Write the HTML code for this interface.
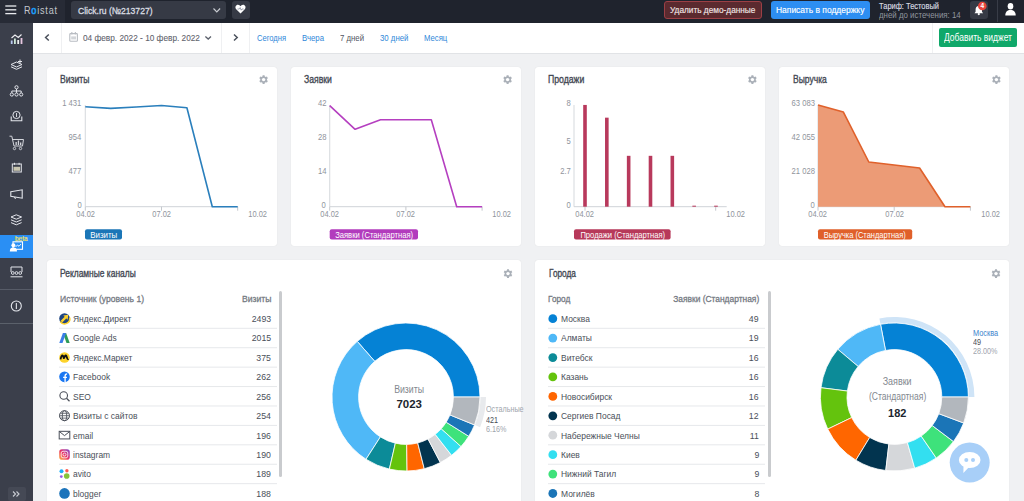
<!DOCTYPE html><html><head><meta charset="utf-8"><title>Roistat</title><style>
html,body{margin:0;padding:0;}
body{width:1024px;height:501px;overflow:hidden;position:relative;background:#f0f1f3;font-family:"Liberation Sans",sans-serif;}
.t{position:absolute;white-space:nowrap;}
svg{position:absolute;left:0;top:0;}
</style></head><body>
<div style="position:absolute;left:0px;top:0px;width:1024px;height:23px;background:#1f232d;"></div>
<div style="position:absolute;left:0px;top:0px;width:65px;height:23px;background:#272b36;"></div>
<div style="position:absolute;left:0px;top:23px;width:33px;height:478px;background:#3b3f4b;"></div>
<div style="position:absolute;left:33px;top:23px;width:991px;height:31px;background:#ffffff;border-bottom:1px solid #e1e3e6;box-sizing:border-box;"></div>
<div style="position:absolute;left:61px;top:23px;width:1px;height:30px;background:#eff0f2;"></div>
<div style="position:absolute;left:221px;top:23px;width:1px;height:30px;background:#eff0f2;"></div>
<div style="position:absolute;left:249px;top:23px;width:1px;height:30px;background:#eff0f2;"></div>
<div style="position:absolute;left:932px;top:23px;width:1px;height:30px;background:#eff0f2;"></div>
<div style="position:absolute;left:47px;top:67px;width:230px;height:179px;background:#ffffff;border-radius:3px;box-shadow:0 0 1px rgba(0,0,0,.12);"></div>
<div style="position:absolute;left:291px;top:67px;width:230px;height:179px;background:#ffffff;border-radius:3px;box-shadow:0 0 1px rgba(0,0,0,.12);"></div>
<div style="position:absolute;left:535px;top:67px;width:230px;height:179px;background:#ffffff;border-radius:3px;box-shadow:0 0 1px rgba(0,0,0,.12);"></div>
<div style="position:absolute;left:779px;top:67px;width:230px;height:179px;background:#ffffff;border-radius:3px;box-shadow:0 0 1px rgba(0,0,0,.12);"></div>
<div style="position:absolute;left:47px;top:260px;width:474px;height:260px;background:#ffffff;border-radius:3px;box-shadow:0 0 1px rgba(0,0,0,.12);"></div>
<div style="position:absolute;left:535px;top:260px;width:474px;height:260px;background:#ffffff;border-radius:3px;box-shadow:0 0 1px rgba(0,0,0,.12);"></div>
<div style="position:absolute;left:71px;top:1px;width:155px;height:18px;background:#363a45;border-radius:3px;"></div>
<div style="position:absolute;left:232px;top:1px;width:18px;height:18px;background:#363a45;border-radius:3px;"></div>
<div style="position:absolute;left:664px;top:1px;width:98px;height:18px;background:#5b2a2f;border:1px solid #9c3f45;box-sizing:border-box;border-radius:3px;"></div>
<div style="position:absolute;left:771px;top:1px;width:99px;height:18px;background:#2d8ef2;border-radius:3px;"></div>
<div style="position:absolute;left:970px;top:1px;width:18px;height:18px;background:#363a45;border-radius:3px;"></div>
<div style="position:absolute;left:997px;top:0px;width:1px;height:22px;background:#383c47;"></div>
<div style="position:absolute;left:939px;top:28.3px;width:78px;height:18.5px;background:#10a86a;border-radius:2px;"></div>
<div style="position:absolute;left:0px;top:235px;width:33px;height:23px;background:#2a8ff4;"></div>
<div style="position:absolute;left:0px;top:289px;width:33px;height:1px;background:#575c68;"></div>
<div style="position:absolute;left:0px;top:323px;width:33px;height:1px;background:#5b616b;"></div>
<div style="position:absolute;left:8px;top:487px;width:18px;height:14px;background:#454955;border-radius:2px;"></div>
<div style="position:absolute;left:279px;top:291px;width:3px;height:186px;background:#c9cbce;border-radius:2px;"></div>
<div style="position:absolute;left:767.5px;top:291px;width:3px;height:186px;background:#c9cbce;border-radius:2px;"></div>
<div class="t" style="left:23.60px;top:4.65px;font-size:10.5px;line-height:10.5px;color:#c3c6cc;font-weight:normal;transform:scaleX(0.8671);transform-origin:0 0;letter-spacing:0.9px;">R<span style="color:#1d9af2;-webkit-text-stroke:0.7px #1d9af2">o</span>istat</div>
<div class="t" style="left:77.80px;top:5.70px;font-size:9.6px;line-height:9.6px;color:#dadde2;font-weight:normal;transform:scaleX(0.8945);transform-origin:0 0;-webkit-text-stroke:0.3px #dadde2;">Click.ru (№213727)</div>
<div class="t" style="left:670.00px;top:5.35px;font-size:9.7px;line-height:9.7px;color:#f1e6e6;font-weight:normal;transform:scaleX(0.8532);transform-origin:0 0;-webkit-text-stroke:0.15px #f1e6e6;">Удалить демо-данные</div>
<div class="t" style="left:776.00px;top:5.35px;font-size:9.7px;line-height:9.7px;color:#ffffff;font-weight:normal;transform:scaleX(0.8730);transform-origin:0 0;-webkit-text-stroke:0.15px #ffffff;">Написать в поддержку</div>
<div class="t" style="left:879.30px;top:1.85px;font-size:8.5px;line-height:8.5px;color:#d8dbe0;font-weight:normal;transform:scaleX(0.8782);transform-origin:0 0;-webkit-text-stroke:0.15px #d8dbe0;">Тариф: Тестовый</div>
<div class="t" style="left:879.30px;top:11.15px;font-size:8.5px;line-height:8.5px;color:#90959e;font-weight:normal;transform:scaleX(0.9267);transform-origin:0 0;">дней до истечения: 14</div>
<div class="t" style="left:82.50px;top:33.20px;font-size:9.6px;line-height:9.6px;color:#5f646d;font-weight:normal;transform:scaleX(0.8606);transform-origin:0 0;-webkit-text-stroke:0.1px #5f646d;">04 февр. 2022 - 10 февр. 2022</div>
<div class="t" style="left:257.20px;top:32.75px;font-size:9.5px;line-height:9.5px;color:#2f87d9;font-weight:normal;transform:scaleX(0.7965);transform-origin:0 0;">Сегодня</div>
<div class="t" style="left:301.90px;top:32.75px;font-size:9.5px;line-height:9.5px;color:#2f87d9;font-weight:normal;transform:scaleX(0.8202);transform-origin:0 0;">Вчера</div>
<div class="t" style="left:339.50px;top:32.75px;font-size:9.5px;line-height:9.5px;color:#50555f;font-weight:normal;transform:scaleX(0.8190);transform-origin:0 0;">7 дней</div>
<div class="t" style="left:379.60px;top:32.75px;font-size:9.5px;line-height:9.5px;color:#2f87d9;font-weight:normal;transform:scaleX(0.8211);transform-origin:0 0;">30 дней</div>
<div class="t" style="left:423.70px;top:32.75px;font-size:9.5px;line-height:9.5px;color:#2f87d9;font-weight:normal;transform:scaleX(0.8101);transform-origin:0 0;">Месяц</div>
<div class="t" style="left:943.90px;top:33.40px;font-size:10px;line-height:10px;color:#ffffff;font-weight:normal;transform:scaleX(0.8478);transform-origin:0 0;">Добавить виджет</div>
<div class="t" style="left:60.00px;top:75.00px;font-size:10.4px;line-height:10.4px;color:#434853;font-weight:normal;transform:scaleX(0.8295);transform-origin:0 0;-webkit-text-stroke:0.35px #434853;">Визиты</div>
<div class="t" style="left:303.80px;top:75.00px;font-size:10.4px;line-height:10.4px;color:#434853;font-weight:normal;transform:scaleX(0.8308);transform-origin:0 0;-webkit-text-stroke:0.35px #434853;">Заявки</div>
<div class="t" style="left:548.00px;top:75.00px;font-size:10.4px;line-height:10.4px;color:#434853;font-weight:normal;transform:scaleX(0.8357);transform-origin:0 0;-webkit-text-stroke:0.35px #434853;">Продажи</div>
<div class="t" style="left:792.80px;top:75.00px;font-size:10.4px;line-height:10.4px;color:#434853;font-weight:normal;transform:scaleX(0.8216);transform-origin:0 0;-webkit-text-stroke:0.35px #434853;">Выручка</div>
<div class="t" style="left:60.00px;top:269.10px;font-size:10.2px;line-height:10.2px;color:#434853;font-weight:normal;transform:scaleX(0.8269);transform-origin:0 0;-webkit-text-stroke:0.35px #434853;">Рекламные каналы</div>
<div class="t" style="left:548.70px;top:269.10px;font-size:10.2px;line-height:10.2px;color:#434853;font-weight:normal;transform:scaleX(0.8118);transform-origin:0 0;-webkit-text-stroke:0.35px #434853;">Города</div>
<svg width="1024" height="501" viewBox="0 0 1024 501"><polygon points="262.44,76.41 262.66,75.20 264.54,75.20 264.76,76.41 265.79,77.00 266.94,76.59 267.88,78.21 266.95,79.01 266.95,80.19 267.88,80.99 266.94,82.61 265.79,82.20 264.76,82.79 264.54,84.00 262.66,84.00 262.44,82.79 261.41,82.20 260.26,82.61 259.32,80.99 260.25,80.19 260.25,79.01 259.32,78.21 260.26,76.59 261.41,77.00" fill="#aab0b8"/><circle cx="263.6" cy="79.6" r="1.7" fill="#fff"/><polygon points="506.44,76.41 506.66,75.20 508.54,75.20 508.76,76.41 509.79,77.00 510.94,76.59 511.88,78.21 510.95,79.01 510.95,80.19 511.88,80.99 510.94,82.61 509.79,82.20 508.76,82.79 508.54,84.00 506.66,84.00 506.44,82.79 505.41,82.20 504.26,82.61 503.32,80.99 504.25,80.19 504.25,79.01 503.32,78.21 504.26,76.59 505.41,77.00" fill="#aab0b8"/><circle cx="507.6" cy="79.6" r="1.7" fill="#fff"/><polygon points="751.24,76.41 751.46,75.20 753.34,75.20 753.56,76.41 754.59,77.00 755.74,76.59 756.68,78.21 755.75,79.01 755.75,80.19 756.68,80.99 755.74,82.61 754.59,82.20 753.56,82.79 753.34,84.00 751.46,84.00 751.24,82.79 750.21,82.20 749.06,82.61 748.12,80.99 749.05,80.19 749.05,79.01 748.12,78.21 749.06,76.59 750.21,77.00" fill="#aab0b8"/><circle cx="752.4" cy="79.6" r="1.7" fill="#fff"/><polygon points="995.24,76.41 995.46,75.20 997.34,75.20 997.56,76.41 998.59,77.00 999.74,76.59 1000.68,78.21 999.75,79.01 999.75,80.19 1000.68,80.99 999.74,82.61 998.59,82.20 997.56,82.79 997.34,84.00 995.46,84.00 995.24,82.79 994.21,82.20 993.06,82.61 992.12,80.99 993.05,80.19 993.05,79.01 992.12,78.21 993.06,76.59 994.21,77.00" fill="#aab0b8"/><circle cx="996.4" cy="79.6" r="1.7" fill="#fff"/><polygon points="506.84,270.41 507.06,269.20 508.94,269.20 509.16,270.41 510.19,271.00 511.34,270.59 512.28,272.21 511.35,273.01 511.35,274.19 512.28,274.99 511.34,276.61 510.19,276.20 509.16,276.79 508.94,278.00 507.06,278.00 506.84,276.79 505.81,276.20 504.66,276.61 503.72,274.99 504.65,274.19 504.65,273.01 503.72,272.21 504.66,270.59 505.81,271.00" fill="#aab0b8"/><circle cx="508" cy="273.6" r="1.7" fill="#fff"/><polygon points="994.84,270.41 995.06,269.20 996.94,269.20 997.16,270.41 998.19,271.00 999.34,270.59 1000.28,272.21 999.35,273.01 999.35,274.19 1000.28,274.99 999.34,276.61 998.19,276.20 997.16,276.79 996.94,278.00 995.06,278.00 994.84,276.79 993.81,276.20 992.66,276.61 991.72,274.99 992.65,274.19 992.65,273.01 991.72,272.21 992.66,270.59 993.81,271.00" fill="#aab0b8"/><circle cx="996" cy="273.6" r="1.7" fill="#fff"/><line x1="85.3" y1="105" x2="85.3" y2="206.7" stroke="#d9dce0" stroke-width="1.1"/><line x1="85.3" y1="206.7" x2="237.7" y2="206.7" stroke="#cfd3d8" stroke-width="1"/><line x1="85.3" y1="206.7" x2="85.3" y2="210.7" stroke="#c4c8cd" stroke-width="1"/><line x1="161.5" y1="206.7" x2="161.5" y2="210.7" stroke="#c4c8cd" stroke-width="1"/><line x1="237.7" y1="206.7" x2="237.7" y2="210.7" stroke="#c4c8cd" stroke-width="1"/><polyline fill="none" stroke="#2a7fbc" stroke-width="1.6" stroke-linejoin="round" points="85.3,106.8 110.7,108.4 136.1,107.0 161.5,105.5 186.9,107.7 212.3,206.7 237.7,206.7"/><line x1="329.7" y1="105" x2="329.7" y2="206.7" stroke="#d9dce0" stroke-width="1.1"/><line x1="329.7" y1="206.7" x2="482.09999999999997" y2="206.7" stroke="#cfd3d8" stroke-width="1"/><line x1="329.7" y1="206.7" x2="329.7" y2="210.7" stroke="#c4c8cd" stroke-width="1"/><line x1="405.9" y1="206.7" x2="405.9" y2="210.7" stroke="#c4c8cd" stroke-width="1"/><line x1="482.09999999999997" y1="206.7" x2="482.09999999999997" y2="210.7" stroke="#c4c8cd" stroke-width="1"/><polyline fill="none" stroke="#b53fc0" stroke-width="1.6" stroke-linejoin="round" points="329.7,105.7 355.1,129.3 380.5,119.7 405.9,119.7 431.3,119.7 456.7,206.7 482.1,206.7"/><line x1="574" y1="105" x2="574" y2="206.7" stroke="#d9dce0" stroke-width="1.1"/><line x1="574" y1="206.7" x2="726.7" y2="206.7" stroke="#cfd3d8" stroke-width="1"/><line x1="585" y1="206.7" x2="585" y2="210.7" stroke="#c4c8cd" stroke-width="1"/><line x1="715.7" y1="206.7" x2="715.7" y2="210.7" stroke="#c4c8cd" stroke-width="1"/><rect x="583.20" y="104.94" width="3.6" height="101.76" fill="#b8395c"/><rect x="605.03" y="117.66" width="3.6" height="89.04" fill="#b8395c"/><rect x="626.86" y="155.82" width="3.6" height="50.88" fill="#b8395c"/><rect x="648.69" y="155.82" width="3.6" height="50.88" fill="#b8395c"/><rect x="670.52" y="155.82" width="3.6" height="50.88" fill="#b8395c"/><rect x="692.35" y="205.68" width="3.6" height="1.02" fill="#b8395c"/><rect x="714.18" y="205.68" width="3.6" height="1.02" fill="#b8395c"/><line x1="818" y1="105" x2="818" y2="206.7" stroke="#d9dce0" stroke-width="1.1"/><line x1="818" y1="206.7" x2="970.4" y2="206.7" stroke="#cfd3d8" stroke-width="1"/><line x1="818" y1="206.7" x2="818" y2="210.7" stroke="#c4c8cd" stroke-width="1"/><line x1="894.2" y1="206.7" x2="894.2" y2="210.7" stroke="#c4c8cd" stroke-width="1"/><line x1="970.4" y1="206.7" x2="970.4" y2="210.7" stroke="#c4c8cd" stroke-width="1"/><polygon fill="#ec9b76" points="818.0,104.9 843.4,112.1 868.8,162.0 894.2,165.0 919.6,168.0 945.0,206.7 970.4,206.7 970.4,206.7 818,206.7"/><polyline fill="none" stroke="#e0612b" stroke-width="1.6" stroke-linejoin="round" points="818.0,104.9 843.4,112.1 868.8,162.0 894.2,165.0 919.6,168.0 945.0,206.7 970.4,206.7"/><rect x="85" y="229.2" width="37" height="10.4" rx="2" fill="#1b76b7"/><rect x="329.7" y="229.2" width="88.3" height="10.4" rx="2" fill="#b23bbd"/><rect x="574" y="229.2" width="96.6" height="10.4" rx="2" fill="#b7395a"/><rect x="818" y="229.2" width="94.2" height="10.4" rx="2" fill="#e0602a"/><path d="M480.00,397.00 A74,74 0 0 0 357.23,341.35 L374.76,361.35 A47.4,47.4 0 0 1 453.40,397.00 Z" fill="#0582d5" stroke="#fff" stroke-width="0.8" stroke-linejoin="round"/><path d="M357.23,341.35 A74,74 0 0 0 366.02,459.27 L380.39,436.89 A47.4,47.4 0 0 1 374.76,361.35 Z" fill="#4fb8f7" stroke="#fff" stroke-width="0.8" stroke-linejoin="round"/><path d="M366.02,459.27 A74,74 0 0 0 389.40,469.11 L395.37,443.19 A47.4,47.4 0 0 1 380.39,436.89 Z" fill="#0c8b98" stroke="#fff" stroke-width="0.8" stroke-linejoin="round"/><path d="M389.40,469.11 A74,74 0 0 0 407.07,470.99 L406.69,444.40 A47.4,47.4 0 0 1 395.37,443.19 Z" fill="#64c30d" stroke="#fff" stroke-width="0.8" stroke-linejoin="round"/><path d="M407.07,470.99 A74,74 0 0 0 424.28,468.71 L417.71,442.93 A47.4,47.4 0 0 1 406.69,444.40 Z" fill="#ff6600" stroke="#fff" stroke-width="0.8" stroke-linejoin="round"/><path d="M424.28,468.71 A74,74 0 0 0 440.37,462.53 L428.02,438.98 A47.4,47.4 0 0 1 417.71,442.93 Z" fill="#02344f" stroke="#fff" stroke-width="0.8" stroke-linejoin="round"/><path d="M440.37,462.53 A74,74 0 0 0 451.55,455.32 L435.18,434.36 A47.4,47.4 0 0 1 428.02,438.98 Z" fill="#d5d7da" stroke="#fff" stroke-width="0.8" stroke-linejoin="round"/><path d="M451.55,455.32 A74,74 0 0 0 460.99,446.52 L441.22,428.72 A47.4,47.4 0 0 1 435.18,434.36 Z" fill="#33dff0" stroke="#fff" stroke-width="0.8" stroke-linejoin="round"/><path d="M460.99,446.52 A74,74 0 0 0 468.72,436.28 L446.17,422.16 A47.4,47.4 0 0 1 441.22,428.72 Z" fill="#3ee27b" stroke="#fff" stroke-width="0.8" stroke-linejoin="round"/><path d="M468.72,436.28 A74,74 0 0 0 474.53,424.91 L449.90,414.88 A47.4,47.4 0 0 1 446.17,422.16 Z" fill="#1b75b7" stroke="#fff" stroke-width="0.8" stroke-linejoin="round"/><path d="M474.53,424.91 A74,74 0 0 0 480.00,397.00 L453.40,397.00 A47.4,47.4 0 0 1 449.90,414.88 Z" fill="#b2b7bd" stroke="#fff" stroke-width="0.8" stroke-linejoin="round"/><path d="M475.00,425.10 A74,74 0 0 0 480.50,397.00 L486.00,397.00 A80,80 0 0 1 480.09,427.18 Z" fill="#e8eaed"/><path d="M968.40,397.00 A74,74 0 0 0 880.53,324.31 L885.52,350.44 A47.4,47.4 0 0 1 941.80,397.00 Z" fill="#0582d5" stroke="#fff" stroke-width="0.8" stroke-linejoin="round"/><path d="M968.90,397.00 A74,74 0 0 0 880.44,323.82 L879.41,318.42 A80,80 0 0 1 974.40,397.00 Z" fill="#cfe4f7"/><path d="M880.53,324.31 A74,74 0 0 0 837.81,349.32 L858.15,366.46 A47.4,47.4 0 0 1 885.52,350.44 Z" fill="#4fb8f7" stroke="#fff" stroke-width="0.8" stroke-linejoin="round"/><path d="M837.81,349.32 A74,74 0 0 0 820.98,387.73 L847.37,391.06 A47.4,47.4 0 0 1 858.15,366.46 Z" fill="#0c8b98" stroke="#fff" stroke-width="0.8" stroke-linejoin="round"/><path d="M820.98,387.73 A74,74 0 0 0 827.73,429.11 L851.69,417.57 A47.4,47.4 0 0 1 847.37,391.06 Z" fill="#64c30d" stroke="#fff" stroke-width="0.8" stroke-linejoin="round"/><path d="M827.73,429.11 A74,74 0 0 0 855.88,460.18 L869.72,437.47 A47.4,47.4 0 0 1 851.69,417.57 Z" fill="#ff6600" stroke="#fff" stroke-width="0.8" stroke-linejoin="round"/><path d="M855.88,460.18 A74,74 0 0 0 885.78,470.50 L888.88,444.08 A47.4,47.4 0 0 1 869.72,437.47 Z" fill="#02344f" stroke="#fff" stroke-width="0.8" stroke-linejoin="round"/><path d="M885.78,470.50 A74,74 0 0 0 914.73,468.15 L907.42,442.58 A47.4,47.4 0 0 1 888.88,444.08 Z" fill="#d5d7da" stroke="#fff" stroke-width="0.8" stroke-linejoin="round"/><path d="M914.73,468.15 A74,74 0 0 0 936.27,458.02 L921.22,436.08 A47.4,47.4 0 0 1 907.42,442.58 Z" fill="#33dff0" stroke="#fff" stroke-width="0.8" stroke-linejoin="round"/><path d="M936.27,458.02 A74,74 0 0 0 953.48,441.56 L932.24,425.54 A47.4,47.4 0 0 1 921.22,436.08 Z" fill="#3ee27b" stroke="#fff" stroke-width="0.8" stroke-linejoin="round"/><path d="M953.48,441.56 A74,74 0 0 0 963.68,423.00 L938.78,413.66 A47.4,47.4 0 0 1 932.24,425.54 Z" fill="#1b75b7" stroke="#fff" stroke-width="0.8" stroke-linejoin="round"/><path d="M963.68,423.00 A74,74 0 0 0 968.40,397.00 L941.80,397.00 A47.4,47.4 0 0 1 938.78,413.66 Z" fill="#b2b7bd" stroke="#fff" stroke-width="0.8" stroke-linejoin="round"/><circle cx="969.7" cy="462.6" r="20" fill="#a8cff8"/><ellipse cx="969.7" cy="460" rx="10.8" ry="8.1" fill="#fff"/><path d="M963.5,465 L963.4,473 L970,466 Z" fill="#fff"/><circle cx="966.3" cy="460" r="2" fill="#a8cff8"/><circle cx="973" cy="460" r="2" fill="#a8cff8"/><line x1="59" y1="328.30" x2="277" y2="328.30" stroke="#e6e8eb" stroke-width="1"/><line x1="59" y1="347.72" x2="277" y2="347.72" stroke="#e6e8eb" stroke-width="1"/><line x1="59" y1="367.14" x2="277" y2="367.14" stroke="#e6e8eb" stroke-width="1"/><line x1="59" y1="386.56" x2="277" y2="386.56" stroke="#e6e8eb" stroke-width="1"/><line x1="59" y1="405.98" x2="277" y2="405.98" stroke="#e6e8eb" stroke-width="1"/><line x1="59" y1="425.40" x2="277" y2="425.40" stroke="#e6e8eb" stroke-width="1"/><line x1="59" y1="444.82" x2="277" y2="444.82" stroke="#e6e8eb" stroke-width="1"/><line x1="59" y1="464.24" x2="277" y2="464.24" stroke="#e6e8eb" stroke-width="1"/><line x1="59" y1="483.66" x2="277" y2="483.66" stroke="#e6e8eb" stroke-width="1"/><line x1="548" y1="328.30" x2="765" y2="328.30" stroke="#e6e8eb" stroke-width="1"/><line x1="548" y1="347.72" x2="765" y2="347.72" stroke="#e6e8eb" stroke-width="1"/><line x1="548" y1="367.14" x2="765" y2="367.14" stroke="#e6e8eb" stroke-width="1"/><line x1="548" y1="386.56" x2="765" y2="386.56" stroke="#e6e8eb" stroke-width="1"/><line x1="548" y1="405.98" x2="765" y2="405.98" stroke="#e6e8eb" stroke-width="1"/><line x1="548" y1="425.40" x2="765" y2="425.40" stroke="#e6e8eb" stroke-width="1"/><line x1="548" y1="444.82" x2="765" y2="444.82" stroke="#e6e8eb" stroke-width="1"/><line x1="548" y1="464.24" x2="765" y2="464.24" stroke="#e6e8eb" stroke-width="1"/><line x1="548" y1="483.66" x2="765" y2="483.66" stroke="#e6e8eb" stroke-width="1"/></svg>
<div class="t" style="left:60.33px;top:98.75px;font-size:8.5px;line-height:8.5px;color:#8f949c;font-weight:normal;transform:scaleX(0.9000);transform-origin:100% 0;">1 431</div>
<div class="t" style="left:67.42px;top:132.75px;font-size:8.5px;line-height:8.5px;color:#8f949c;font-weight:normal;transform:scaleX(0.9000);transform-origin:100% 0;">954</div>
<div class="t" style="left:67.42px;top:166.75px;font-size:8.5px;line-height:8.5px;color:#8f949c;font-weight:normal;transform:scaleX(0.9000);transform-origin:100% 0;">477</div>
<div class="t" style="left:76.87px;top:200.75px;font-size:8.5px;line-height:8.5px;color:#8f949c;font-weight:normal;transform:scaleX(0.9000);transform-origin:100% 0;">0</div>
<div class="t" style="left:316.55px;top:98.75px;font-size:8.5px;line-height:8.5px;color:#8f949c;font-weight:normal;transform:scaleX(0.9000);transform-origin:100% 0;">42</div>
<div class="t" style="left:316.55px;top:132.75px;font-size:8.5px;line-height:8.5px;color:#8f949c;font-weight:normal;transform:scaleX(0.9000);transform-origin:100% 0;">28</div>
<div class="t" style="left:316.55px;top:166.75px;font-size:8.5px;line-height:8.5px;color:#8f949c;font-weight:normal;transform:scaleX(0.9000);transform-origin:100% 0;">14</div>
<div class="t" style="left:321.27px;top:200.75px;font-size:8.5px;line-height:8.5px;color:#8f949c;font-weight:normal;transform:scaleX(0.9000);transform-origin:100% 0;">0</div>
<div class="t" style="left:565.77px;top:98.75px;font-size:8.5px;line-height:8.5px;color:#8f949c;font-weight:normal;transform:scaleX(0.9000);transform-origin:100% 0;">8</div>
<div class="t" style="left:565.77px;top:136.65px;font-size:8.5px;line-height:8.5px;color:#8f949c;font-weight:normal;transform:scaleX(0.9000);transform-origin:100% 0;">5</div>
<div class="t" style="left:558.68px;top:166.55px;font-size:8.5px;line-height:8.5px;color:#8f949c;font-weight:normal;transform:scaleX(0.9000);transform-origin:100% 0;">2.7</div>
<div class="t" style="left:565.77px;top:200.55px;font-size:8.5px;line-height:8.5px;color:#8f949c;font-weight:normal;transform:scaleX(0.9000);transform-origin:100% 0;">0</div>
<div class="t" style="left:788.50px;top:98.75px;font-size:8.5px;line-height:8.5px;color:#8f949c;font-weight:normal;transform:scaleX(0.9000);transform-origin:100% 0;">63 083</div>
<div class="t" style="left:788.50px;top:132.75px;font-size:8.5px;line-height:8.5px;color:#8f949c;font-weight:normal;transform:scaleX(0.9000);transform-origin:100% 0;">42 055</div>
<div class="t" style="left:788.50px;top:166.75px;font-size:8.5px;line-height:8.5px;color:#8f949c;font-weight:normal;transform:scaleX(0.9000);transform-origin:100% 0;">21 028</div>
<div class="t" style="left:809.77px;top:200.75px;font-size:8.5px;line-height:8.5px;color:#8f949c;font-weight:normal;transform:scaleX(0.9000);transform-origin:100% 0;">0</div>
<div class="t" style="left:74.66px;top:210.25px;font-size:8.5px;line-height:8.5px;color:#8f949c;font-weight:normal;transform:scaleX(0.8800);transform-origin:50% 0;">04.02</div>
<div class="t" style="left:150.86px;top:210.25px;font-size:8.5px;line-height:8.5px;color:#8f949c;font-weight:normal;transform:scaleX(0.8800);transform-origin:50% 0;">07.02</div>
<div class="t" style="left:247.06px;top:210.25px;font-size:8.5px;line-height:8.5px;color:#8f949c;font-weight:normal;transform:scaleX(0.8800);transform-origin:50% 0;">10.02</div>
<div class="t" style="left:319.06px;top:210.25px;font-size:8.5px;line-height:8.5px;color:#8f949c;font-weight:normal;transform:scaleX(0.8800);transform-origin:50% 0;">04.02</div>
<div class="t" style="left:395.26px;top:210.25px;font-size:8.5px;line-height:8.5px;color:#8f949c;font-weight:normal;transform:scaleX(0.8800);transform-origin:50% 0;">07.02</div>
<div class="t" style="left:491.36px;top:210.25px;font-size:8.5px;line-height:8.5px;color:#8f949c;font-weight:normal;transform:scaleX(0.8800);transform-origin:50% 0;">10.02</div>
<div class="t" style="left:574.06px;top:210.25px;font-size:8.5px;line-height:8.5px;color:#8f949c;font-weight:normal;transform:scaleX(0.8800);transform-origin:50% 0;">04.02</div>
<div class="t" style="left:725.06px;top:210.25px;font-size:8.5px;line-height:8.5px;color:#8f949c;font-weight:normal;transform:scaleX(0.8800);transform-origin:50% 0;">10.02</div>
<div class="t" style="left:807.36px;top:210.25px;font-size:8.5px;line-height:8.5px;color:#8f949c;font-weight:normal;transform:scaleX(0.8800);transform-origin:50% 0;">04.02</div>
<div class="t" style="left:883.56px;top:210.25px;font-size:8.5px;line-height:8.5px;color:#8f949c;font-weight:normal;transform:scaleX(0.8800);transform-origin:50% 0;">07.02</div>
<div class="t" style="left:979.66px;top:210.25px;font-size:8.5px;line-height:8.5px;color:#8f949c;font-weight:normal;transform:scaleX(0.8800);transform-origin:50% 0;">10.02</div>
<div class="t" style="left:86.74px;top:229.70px;font-size:9.8px;line-height:9.8px;color:#ffffff;font-weight:normal;transform:scaleX(0.8057);transform-origin:50% 0;">Визиты</div>
<div class="t" style="left:323.71px;top:229.70px;font-size:9.8px;line-height:9.8px;color:#ffffff;font-weight:normal;transform:scaleX(0.7779);transform-origin:50% 0;">Заявки (Стандартная)</div>
<div class="t" style="left:567.52px;top:229.70px;font-size:9.8px;line-height:9.8px;color:#ffffff;font-weight:normal;transform:scaleX(0.7731);transform-origin:50% 0;">Продажи (Стандартная)</div>
<div class="t" style="left:811.34px;top:229.70px;font-size:9.8px;line-height:9.8px;color:#ffffff;font-weight:normal;transform:scaleX(0.7627);transform-origin:50% 0;">Выручка (Стандартная)</div>
<div class="t" style="left:60.00px;top:294.45px;font-size:9.5px;line-height:9.5px;color:#747982;font-weight:normal;transform:scaleX(0.9025);transform-origin:0 0;-webkit-text-stroke:0.3px #747982;">Источник (уровень 1)</div>
<div class="t" style="left:238.51px;top:294.45px;font-size:9.5px;line-height:9.5px;color:#747982;font-weight:normal;transform:scaleX(0.9050);transform-origin:100% 0;-webkit-text-stroke:0.3px #747982;">Визиты</div>
<div class="t" style="left:548.30px;top:294.45px;font-size:9.5px;line-height:9.5px;color:#747982;font-weight:normal;transform:scaleX(0.8679);transform-origin:0 0;-webkit-text-stroke:0.3px #747982;">Город</div>
<div class="t" style="left:661.79px;top:294.45px;font-size:9.5px;line-height:9.5px;color:#747982;font-weight:normal;transform:scaleX(0.8847);transform-origin:100% 0;-webkit-text-stroke:0.3px #747982;">Заявки (Стандартная)</div>
<div class="t" style="left:72.60px;top:314.05px;font-size:9.5px;line-height:9.5px;color:#4a4f59;font-weight:normal;transform:scaleX(0.8900);transform-origin:0 0;">Яндекс.Директ</div>
<div class="t" style="left:249.87px;top:314.05px;font-size:9.5px;line-height:9.5px;color:#4a4f59;font-weight:normal;transform:scaleX(0.9200);transform-origin:100% 0;">2493</div>
<div class="t" style="left:72.60px;top:333.47px;font-size:9.5px;line-height:9.5px;color:#4a4f59;font-weight:normal;transform:scaleX(0.8900);transform-origin:0 0;">Google Ads</div>
<div class="t" style="left:249.87px;top:333.47px;font-size:9.5px;line-height:9.5px;color:#4a4f59;font-weight:normal;transform:scaleX(0.9200);transform-origin:100% 0;">2015</div>
<div class="t" style="left:72.60px;top:352.89px;font-size:9.5px;line-height:9.5px;color:#4a4f59;font-weight:normal;transform:scaleX(0.8900);transform-origin:0 0;">Яндекс.Маркет</div>
<div class="t" style="left:255.15px;top:352.89px;font-size:9.5px;line-height:9.5px;color:#4a4f59;font-weight:normal;transform:scaleX(0.9200);transform-origin:100% 0;">375</div>
<div class="t" style="left:72.60px;top:372.31px;font-size:9.5px;line-height:9.5px;color:#4a4f59;font-weight:normal;transform:scaleX(0.8900);transform-origin:0 0;">Facebook</div>
<div class="t" style="left:255.15px;top:372.31px;font-size:9.5px;line-height:9.5px;color:#4a4f59;font-weight:normal;transform:scaleX(0.9200);transform-origin:100% 0;">262</div>
<div class="t" style="left:72.60px;top:391.73px;font-size:9.5px;line-height:9.5px;color:#4a4f59;font-weight:normal;transform:scaleX(0.8900);transform-origin:0 0;">SEO</div>
<div class="t" style="left:255.15px;top:391.73px;font-size:9.5px;line-height:9.5px;color:#4a4f59;font-weight:normal;transform:scaleX(0.9200);transform-origin:100% 0;">256</div>
<div class="t" style="left:72.60px;top:411.15px;font-size:9.5px;line-height:9.5px;color:#4a4f59;font-weight:normal;transform:scaleX(0.8900);transform-origin:0 0;">Визиты с сайтов</div>
<div class="t" style="left:255.15px;top:411.15px;font-size:9.5px;line-height:9.5px;color:#4a4f59;font-weight:normal;transform:scaleX(0.9200);transform-origin:100% 0;">254</div>
<div class="t" style="left:72.60px;top:430.57px;font-size:9.5px;line-height:9.5px;color:#4a4f59;font-weight:normal;transform:scaleX(0.8900);transform-origin:0 0;">email</div>
<div class="t" style="left:255.15px;top:430.57px;font-size:9.5px;line-height:9.5px;color:#4a4f59;font-weight:normal;transform:scaleX(0.9200);transform-origin:100% 0;">196</div>
<div class="t" style="left:72.60px;top:449.99px;font-size:9.5px;line-height:9.5px;color:#4a4f59;font-weight:normal;transform:scaleX(0.8900);transform-origin:0 0;">instagram</div>
<div class="t" style="left:255.15px;top:449.99px;font-size:9.5px;line-height:9.5px;color:#4a4f59;font-weight:normal;transform:scaleX(0.9200);transform-origin:100% 0;">190</div>
<div class="t" style="left:72.60px;top:469.41px;font-size:9.5px;line-height:9.5px;color:#4a4f59;font-weight:normal;transform:scaleX(0.8900);transform-origin:0 0;">avito</div>
<div class="t" style="left:255.15px;top:469.41px;font-size:9.5px;line-height:9.5px;color:#4a4f59;font-weight:normal;transform:scaleX(0.9200);transform-origin:100% 0;">189</div>
<div class="t" style="left:72.60px;top:488.83px;font-size:9.5px;line-height:9.5px;color:#4a4f59;font-weight:normal;transform:scaleX(0.8900);transform-origin:0 0;">blogger</div>
<div class="t" style="left:255.15px;top:488.83px;font-size:9.5px;line-height:9.5px;color:#4a4f59;font-weight:normal;transform:scaleX(0.9200);transform-origin:100% 0;">188</div>
<div class="t" style="left:561.10px;top:314.05px;font-size:9.5px;line-height:9.5px;color:#4a4f59;font-weight:normal;transform:scaleX(0.8900);transform-origin:0 0;">Москва</div>
<div class="t" style="left:748.43px;top:314.05px;font-size:9.5px;line-height:9.5px;color:#4a4f59;font-weight:normal;transform:scaleX(0.9200);transform-origin:100% 0;">49</div>
<div class="t" style="left:561.10px;top:333.47px;font-size:9.5px;line-height:9.5px;color:#4a4f59;font-weight:normal;transform:scaleX(0.8900);transform-origin:0 0;">Алматы</div>
<div class="t" style="left:748.43px;top:333.47px;font-size:9.5px;line-height:9.5px;color:#4a4f59;font-weight:normal;transform:scaleX(0.9200);transform-origin:100% 0;">19</div>
<div class="t" style="left:561.10px;top:352.89px;font-size:9.5px;line-height:9.5px;color:#4a4f59;font-weight:normal;transform:scaleX(0.8900);transform-origin:0 0;">Витебск</div>
<div class="t" style="left:748.43px;top:352.89px;font-size:9.5px;line-height:9.5px;color:#4a4f59;font-weight:normal;transform:scaleX(0.9200);transform-origin:100% 0;">16</div>
<div class="t" style="left:561.10px;top:372.31px;font-size:9.5px;line-height:9.5px;color:#4a4f59;font-weight:normal;transform:scaleX(0.8900);transform-origin:0 0;">Казань</div>
<div class="t" style="left:748.43px;top:372.31px;font-size:9.5px;line-height:9.5px;color:#4a4f59;font-weight:normal;transform:scaleX(0.9200);transform-origin:100% 0;">16</div>
<div class="t" style="left:561.10px;top:391.73px;font-size:9.5px;line-height:9.5px;color:#4a4f59;font-weight:normal;transform:scaleX(0.8900);transform-origin:0 0;">Новосибирск</div>
<div class="t" style="left:748.43px;top:391.73px;font-size:9.5px;line-height:9.5px;color:#4a4f59;font-weight:normal;transform:scaleX(0.9200);transform-origin:100% 0;">16</div>
<div class="t" style="left:561.10px;top:411.15px;font-size:9.5px;line-height:9.5px;color:#4a4f59;font-weight:normal;transform:scaleX(0.8900);transform-origin:0 0;">Сергиев Посад</div>
<div class="t" style="left:748.43px;top:411.15px;font-size:9.5px;line-height:9.5px;color:#4a4f59;font-weight:normal;transform:scaleX(0.9200);transform-origin:100% 0;">12</div>
<div class="t" style="left:561.10px;top:430.57px;font-size:9.5px;line-height:9.5px;color:#4a4f59;font-weight:normal;transform:scaleX(0.8900);transform-origin:0 0;">Набережные Челны</div>
<div class="t" style="left:749.14px;top:430.57px;font-size:9.5px;line-height:9.5px;color:#4a4f59;font-weight:normal;transform:scaleX(0.9200);transform-origin:100% 0;">11</div>
<div class="t" style="left:561.10px;top:449.99px;font-size:9.5px;line-height:9.5px;color:#4a4f59;font-weight:normal;transform:scaleX(0.8900);transform-origin:0 0;">Киев</div>
<div class="t" style="left:753.72px;top:449.99px;font-size:9.5px;line-height:9.5px;color:#4a4f59;font-weight:normal;transform:scaleX(0.9200);transform-origin:100% 0;">9</div>
<div class="t" style="left:561.10px;top:469.41px;font-size:9.5px;line-height:9.5px;color:#4a4f59;font-weight:normal;transform:scaleX(0.8900);transform-origin:0 0;">Нижний Тагил</div>
<div class="t" style="left:753.72px;top:469.41px;font-size:9.5px;line-height:9.5px;color:#4a4f59;font-weight:normal;transform:scaleX(0.9200);transform-origin:100% 0;">9</div>
<div class="t" style="left:561.10px;top:488.83px;font-size:9.5px;line-height:9.5px;color:#4a4f59;font-weight:normal;transform:scaleX(0.8900);transform-origin:0 0;">Могилёв</div>
<div class="t" style="left:753.72px;top:488.83px;font-size:9.5px;line-height:9.5px;color:#4a4f59;font-weight:normal;transform:scaleX(0.9200);transform-origin:100% 0;">8</div>
<svg width="1024" height="501" viewBox="0 0 1024 501"><circle cx="552.8" cy="318.70" r="4.4" fill="#0582d5"/><circle cx="552.8" cy="338.12" r="4.4" fill="#4fb8f7"/><circle cx="552.8" cy="357.54" r="4.4" fill="#0c8b98"/><circle cx="552.8" cy="376.96" r="4.4" fill="#64c30d"/><circle cx="552.8" cy="396.38" r="4.4" fill="#ff6600"/><circle cx="552.8" cy="415.80" r="4.4" fill="#02344f"/><circle cx="552.8" cy="435.22" r="4.4" fill="#d5d7da"/><circle cx="552.8" cy="454.64" r="4.4" fill="#33dff0"/><circle cx="552.8" cy="474.06" r="4.4" fill="#3ee27b"/><circle cx="552.8" cy="493.48" r="4.4" fill="#1b75b7"/></svg>
<div class="t" style="left:391.90px;top:384.80px;font-size:10px;line-height:10px;color:#83888f;font-weight:normal;transform:scaleX(0.8744);transform-origin:50% 0;">Визиты</div>
<div class="t" style="left:396.56px;top:399.10px;font-size:11px;line-height:11px;color:#20252d;font-weight:bold;transform:scaleX(1.0420);transform-origin:50% 0;">7023</div>
<div class="t" style="left:881.36px;top:376.50px;font-size:10px;line-height:10px;color:#83888f;font-weight:normal;transform:scaleX(0.8950);transform-origin:50% 0;">Заявки</div>
<div class="t" style="left:863.77px;top:392.30px;font-size:10px;line-height:10px;color:#83888f;font-weight:normal;transform:scaleX(0.8505);transform-origin:50% 0;">(Стандартная)</div>
<div class="t" style="left:888.32px;top:407.80px;font-size:11px;line-height:11px;color:#20252d;font-weight:bold;transform:scaleX(0.9971);transform-origin:50% 0;">182</div>
<div class="t" style="left:486.30px;top:405.20px;font-size:8.6px;line-height:8.6px;color:#a0a5ad;font-weight:normal;transform:scaleX(0.8400);transform-origin:0 0;">Остальные</div>
<div class="t" style="left:486.30px;top:415.70px;font-size:8.6px;line-height:8.6px;color:#474c55;font-weight:normal;transform:scaleX(0.8400);transform-origin:0 0;">421</div>
<div class="t" style="left:486.30px;top:424.90px;font-size:8.6px;line-height:8.6px;color:#a0a5ad;font-weight:normal;transform:scaleX(0.8400);transform-origin:0 0;">6.16%</div>
<div class="t" style="left:973.10px;top:328.90px;font-size:8.6px;line-height:8.6px;color:#3d83cc;font-weight:normal;transform:scaleX(0.8549);transform-origin:0 0;">Москва</div>
<div class="t" style="left:973.10px;top:338.20px;font-size:8.6px;line-height:8.6px;color:#474c55;font-weight:normal;transform:scaleX(0.8400);transform-origin:0 0;">49</div>
<div class="t" style="left:973.10px;top:347.40px;font-size:8.6px;line-height:8.6px;color:#a0a5ad;font-weight:normal;transform:scaleX(0.8400);transform-origin:0 0;">28.00%</div>
<svg width="1024" height="501" viewBox="0 0 1024 501"><rect x="5.3" y="5.35" width="11" height="1.3" fill="#e8eaee"/><rect x="5.3" y="9.15" width="11" height="1.3" fill="#e8eaee"/><rect x="5.3" y="12.95" width="11" height="1.3" fill="#e8eaee"/><polyline points="213.5,8.5 216.8,11.8 220.1,8.5" fill="none" stroke="#c9ccd2" stroke-width="1.2"/><path d="M240.5,13.6 L236.2,9.2 C234.6,7.4 235.8,4.8 238,4.8 C239.2,4.8 240,5.6 240.5,6.3 C241,5.6 241.8,4.8 243,4.8 C245.2,4.8 246.4,7.4 244.8,9.2 Z" fill="#ffffff"/><polyline points="237.5,9 239.3,9 240.2,7.6 241.2,10.2 242,9 243.6,9" fill="none" stroke="#7a8090" stroke-width="0.7"/><path d="M978.8,6 C976.6,6 975.6,7.8 975.6,9.6 L975.6,11.8 L974.5,13.2 L983.1,13.2 L982,11.8 L982,9.6 C982,7.8 981,6 978.8,6 Z" fill="#ffffff"/><circle cx="978.8" cy="14.1" r="1.1" fill="#ffffff"/><circle cx="982.3" cy="6" r="4.3" fill="#e8453c"/><ellipse cx="1010.5" cy="6.2" rx="2.8" ry="3.3" fill="#ffffff"/><path d="M1005.3,15.6 C1005.3,11.6 1007.4,9.9 1010.5,9.9 C1013.6,9.9 1015.7,11.6 1015.7,15.6 Z" fill="#ffffff"/><polyline points="48.8,34.5 45.6,37.5 48.8,40.5" fill="none" stroke="#4a505b" stroke-width="1.5"/><polyline points="234,34.5 237.2,37.5 234,40.5" fill="none" stroke="#4a505b" stroke-width="1.5"/><polyline points="205.4,36.4 208.2,39 211,36.4" fill="none" stroke="#5b606b" stroke-width="1.3"/><rect x="69.8" y="33.6" width="7.6" height="7.6" rx="0.8" fill="none" stroke="#b8bcc2" stroke-width="1.1"/><rect x="71.3" y="32" width="1.1" height="2.4" fill="#b8bcc2"/><rect x="74.8" y="32" width="1.1" height="2.4" fill="#b8bcc2"/><rect x="71.2" y="36.4" width="4.8" height="3" fill="#d2d5d9"/><rect x="10.8" y="40.5" width="1.8" height="3.5" fill="#b9c8f0"/><rect x="14" y="38.5" width="1.8" height="5.5" fill="#cfe8d8"/><rect x="17.3" y="40" width="1.8" height="4" fill="#eee"/><rect x="20.6" y="38" width="1.8" height="6" fill="#e8c8e0"/><polyline points="11.5,38 15,35 18.3,37.5 21.5,34.5" fill="none" stroke="#f0f0f4" stroke-width="1.1"/><path d="M11,64.5 L16.5,62 L22,64.5 L16.5,67 Z" fill="none" stroke="#e4e6ec" stroke-width="1"/><path d="M11,66.8 L16.5,69.3 L22,66.8" fill="none" stroke="#e4e6ec" stroke-width="1"/><path d="M20,59.5 V63.5 M18,61.5 H22" stroke="#e4e6ec" stroke-width="1"/><circle cx="16.5" cy="87.3" r="1.6" fill="none" stroke="#e4e6ec" stroke-width="1"/><path d="M16.5,89 V91 M11.8,92.8 V91 H21.2 V92.8 M16.5,91 V92.8" fill="none" stroke="#e4e6ec" stroke-width="1"/><circle cx="11.8" cy="94.5" r="1.6" fill="none" stroke="#e4e6ec" stroke-width="1"/><circle cx="16.5" cy="94.5" r="1.6" fill="none" stroke="#e4e6ec" stroke-width="1"/><circle cx="21.2" cy="94.5" r="1.6" fill="none" stroke="#e4e6ec" stroke-width="1"/><circle cx="16.5" cy="115" r="3.6" fill="none" stroke="#e4e6ec" stroke-width="1"/><path d="M11.2,116.5 V120.8 H21.8 V116.5" fill="none" stroke="#e4e6ec" stroke-width="1.1"/><path d="M16.5,113 V117" stroke="#e4e6ec" stroke-width="0.9"/><path d="M9.5,136.2 H11.8 L14,146 H22.5 L23.5,139.5 H12.6" fill="none" stroke="#d4d6dc" stroke-width="1"/><circle cx="14.5" cy="148.5" r="1.2" fill="none" stroke="#d4d6dc" stroke-width="0.9"/><circle cx="20.5" cy="148.5" r="1.2" fill="none" stroke="#d4d6dc" stroke-width="0.9"/><rect x="15.5" y="142" width="1.3" height="3" fill="#d4d6dc"/><rect x="17.8" y="140.5" width="1.3" height="4.5" fill="#d4d6dc"/><rect x="20" y="142.5" width="1.3" height="2.5" fill="#d4d6dc"/><rect x="12.3" y="164" width="9" height="8" fill="none" stroke="#e4e6ec" stroke-width="1"/><rect x="13.5" y="166.8" width="6.6" height="4" fill="#c9c6b0"/><rect x="14" y="162.8" width="1" height="2" fill="#e4e6ec"/><rect x="18.6" y="162.8" width="1" height="2" fill="#e4e6ec"/><path d="M10.8,191.8 L22.2,189.8 V198.2 L10.8,196.2 Z" fill="none" stroke="#e4e6ec" stroke-width="1.1"/><path d="M14.5,197 L15.5,199" stroke="#e4e6ec" stroke-width="1"/><path d="M11,217 L16.3,214.8 L21.6,217 L16.3,219.2 Z" fill="none" stroke="#e4e6ec" stroke-width="1"/><path d="M11,219.8 L16.3,222 L21.6,219.8 M11,222.6 L16.3,224.8 L21.6,222.6" fill="none" stroke="#e4e6ec" stroke-width="1"/><rect x="13" y="241.8" width="9.5" height="7.5" fill="none" stroke="#ffffff" stroke-width="1.1"/><polyline points="15.5,247 17.5,245 19,246.3 21,244" fill="none" stroke="#ffffff" stroke-width="0.9"/><circle cx="13.4" cy="245.2" r="2" fill="#ffffff"/><path d="M9.8,251.5 C9.8,248.5 11.2,247.6 13.4,247.6 C15.6,247.6 17,248.5 17,251.5 Z" fill="#ffffff"/><path d="M11,272 V267 H22 V272" fill="none" stroke="#e4e6ec" stroke-width="1"/><circle cx="12.8" cy="273" r="1.4" fill="none" stroke="#e4e6ec" stroke-width="0.9"/><circle cx="16.5" cy="273" r="1.4" fill="none" stroke="#e4e6ec" stroke-width="0.9"/><circle cx="20.2" cy="273" r="1.4" fill="none" stroke="#e4e6ec" stroke-width="0.9"/><path d="M10.5,276.8 H22.5" stroke="#e4e6ec" stroke-width="1"/><circle cx="16.3" cy="306" r="5" fill="none" stroke="#e4e6ec" stroke-width="1.1"/><rect x="15.8" y="303" width="1.1" height="6" fill="#e4e6ec"/><polyline points="13,491.5 15.5,494 13,496.5" fill="none" stroke="#c9ccd3" stroke-width="1.1"/><polyline points="16.5,491.5 19,494 16.5,496.5" fill="none" stroke="#c9ccd3" stroke-width="1.1"/><circle cx="64.5" cy="318.6" r="5.3" fill="#1f4682"/><path d="M60.3,321.8 A5.3,5.3 0 0 0 69.7,317.6" fill="none" stroke="#fdd02a" stroke-width="1.6"/><path d="M61.5,321.6 L66.3,316.8" stroke="#fdd02a" stroke-width="2.3"/><path d="M68.3,314.8 L63.3,315.40000000000003 L67.7,319.8 Z" fill="#fdd02a"/><path d="M62.9,333.02000000000004 L66.1,333.02000000000004 L69.7,343.02000000000004 L66.5,343.02000000000004 Z" fill="#2e9b57"/><path d="M59.3,343.02000000000004 L62.9,333.02000000000004 L66.1,333.02000000000004 L62.5,343.02000000000004 Z" fill="#3b7ee6"/><circle cx="64.5" cy="357.44000000000005" r="5.3" fill="#fdd32b"/><path d="M60.5,359.44000000000005 C61.5,354.44000000000005 63.0,354.44000000000005 63.5,357.44000000000005 C64.0,359.94000000000005 65.0,354.44000000000005 66.0,355.44000000000005 C67.0,356.44000000000005 67.0,359.94000000000005 68.5,358.94000000000005" fill="none" stroke="#111" stroke-width="1.8"/><circle cx="64.5" cy="376.86" r="5.3" fill="#1a77f2"/><path d="M65.1,382.16 V376.06 C65.1,374.36 65.7,373.86 67.1,373.86 M63.1,377.46000000000004 H66.9" fill="none" stroke="#fff" stroke-width="1.3"/><circle cx="63.7" cy="395.48" r="3.8" fill="none" stroke="#4a4f59" stroke-width="1.1"/><path d="M66.5,398.28000000000003 L69.5,401.28000000000003" stroke="#4a4f59" stroke-width="1.2"/><circle cx="64.5" cy="415.70000000000005" r="5" fill="none" stroke="#4a4f59" stroke-width="1"/><ellipse cx="64.5" cy="415.70000000000005" rx="2.2" ry="5" fill="none" stroke="#4a4f59" stroke-width="0.9"/><path d="M59.5,415.70000000000005 H69.5 M60.2,413.30000000000007 H68.8 M60.2,418.1 H68.8" stroke="#4a4f59" stroke-width="0.8"/><rect x="59.2" y="431.32" width="10.6" height="7.6" fill="none" stroke="#4a4f59" stroke-width="1"/><polyline points="59.5,431.62 64.5,435.62 69.5,431.62" fill="none" stroke="#4a4f59" stroke-width="1"/><defs><linearGradient id="ig" x1="0" y1="1" x2="1" y2="0"><stop offset="0" stop-color="#fdb740"/><stop offset="0.5" stop-color="#e8336a"/><stop offset="1" stop-color="#7b4fd0"/></linearGradient></defs><rect x="59.2" y="449.24" width="10.6" height="10.6" rx="2.8" fill="url(#ig)"/><rect x="61.2" y="451.24" width="6.6" height="6.6" rx="1.8" fill="none" stroke="#fff" stroke-width="0.8"/><circle cx="64.5" cy="454.54" r="1.5" fill="none" stroke="#fff" stroke-width="0.8"/><circle cx="61.5" cy="471.16" r="2" fill="#1fb0fa"/><circle cx="66.9" cy="470.76000000000005" r="1.7" fill="#ff5a50"/><circle cx="61.3" cy="476.56000000000006" r="1.4" fill="#9a5ae6"/><circle cx="66.7" cy="475.96000000000004" r="2.8" fill="#86c43b"/><circle cx="64.5" cy="493.38000000000005" r="5.3" fill="#1c74bb"/></svg>
<div class="t" style="left:980.49px;top:3.05px;font-size:6.5px;line-height:6.5px;color:#ffffff;font-weight:bold;transform:scaleX(1.0000);transform-origin:50% 0;">4</div>
<div class="t" style="left:14.60px;top:236.05px;font-size:6.5px;line-height:6.5px;color:#f2e15a;font-weight:normal;transform:scaleX(0.9881);transform-origin:0 0;-webkit-text-stroke:0.2px #f2e15a;">beta</div>
</body></html>
